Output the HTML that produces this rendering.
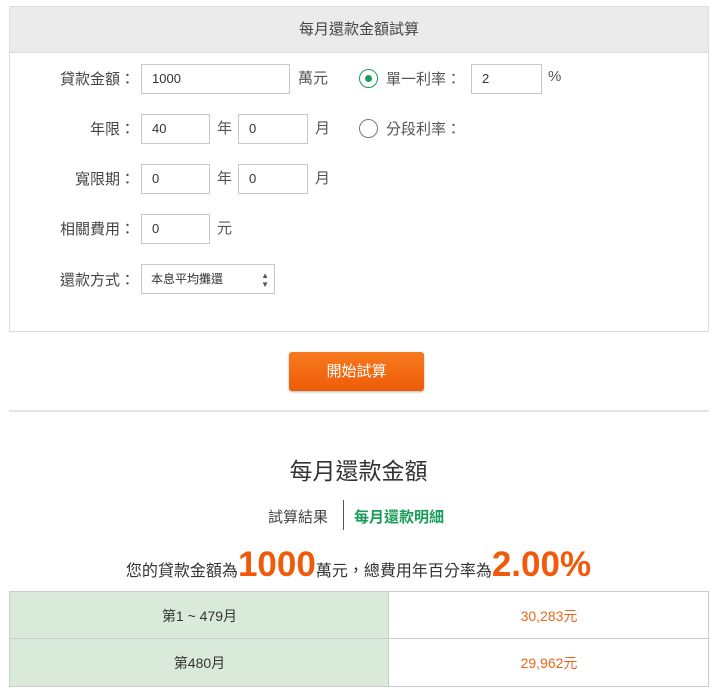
<!DOCTYPE html>
<html><head><meta charset="utf-8"><style>
*{box-sizing:border-box;margin:0;padding:0}
body{width:717px;height:693px;background:#fff;font-family:"Liberation Sans","Noto Sans CJK TC",sans-serif;color:#444;position:relative;overflow:hidden}
.a{position:absolute}
.box{left:9px;top:6px;width:700px;height:326px;border:1px solid #ddd}
.hd{left:10px;top:7px;width:698px;height:46px;background:#ebebeb;text-align:center;line-height:46px;font-size:15px;color:#444;border-bottom:1px solid #ddd}
.lb{font-size:15px;color:#444;text-align:right;width:135px;left:0px}
.in{border:1px solid #c8c8c8;height:30px;font-size:13px;line-height:28px;padding-left:10px;color:#333}
.t{font-size:15px;color:#555}
.rad{width:19px;height:19px;border:1px solid #777;border-radius:50%}
</style></head><body>
<div class="a box"></div>
<div class="a hd">每月還款金額試算</div>

<div class="a lb" style="top:68px">貸款金額：</div>
<div class="a in" style="left:141px;top:64px;width:149px">1000</div>
<div class="a t" style="left:298px;top:67px">萬元</div>
<div class="a rad" style="left:359px;top:69px;border-color:#1a9c5a"><div class="a" style="left:5px;top:5px;width:7px;height:7px;border-radius:50%;background:#1a9c5a"></div></div>
<div class="a t" style="left:386px;top:68px">單一利率：</div>
<div class="a in" style="left:471px;top:64px;width:71px">2</div>
<div class="a t" style="left:548px;top:68px">%</div>

<div class="a lb" style="top:118px">年限：</div>
<div class="a in" style="left:141px;top:114px;width:69px">40</div>
<div class="a t" style="left:217px;top:117px">年</div>
<div class="a in" style="left:238px;top:114px;width:70px">0</div>
<div class="a t" style="left:315px;top:117px">月</div>
<div class="a rad" style="left:359px;top:119px"></div>
<div class="a t" style="left:386px;top:118px">分段利率：</div>

<div class="a lb" style="top:168px">寬限期：</div>
<div class="a in" style="left:141px;top:164px;width:69px">0</div>
<div class="a t" style="left:217px;top:167px">年</div>
<div class="a in" style="left:238px;top:164px;width:70px">0</div>
<div class="a t" style="left:315px;top:167px">月</div>

<div class="a lb" style="top:218px">相關費用：</div>
<div class="a in" style="left:141px;top:214px;width:69px">0</div>
<div class="a t" style="left:217px;top:217px">元</div>

<div class="a lb" style="top:269px">還款方式：</div>
<div class="a in" style="left:141px;top:264px;width:134px;font-size:12px;padding-left:9px">本息平均攤還<span class="a" style="right:5px;font-size:8px;line-height:9px;top:6px;color:#555">▲<br>▼</span></div>

<div class="a" style="left:289px;top:352px;width:135px;height:39px;border-radius:3px;background:linear-gradient(#f77a1e,#ee5c08);box-shadow:0 1px 2px rgba(0,0,0,.3);color:#fff;text-align:center;line-height:39px;font-size:15px">開始試算</div>
<div class="a" style="left:9px;top:410px;width:700px;height:2px;background:#e4e4e4"></div>

<div class="a" style="left:0;width:717px;top:452px;text-align:center;font-size:23px;color:#333">每月還款金額</div>
<div class="a" style="left:268px;top:506px;font-size:15px;color:#444">試算結果</div>
<div class="a" style="left:343px;top:500px;width:1px;height:30px;background:#555"></div>
<div class="a" style="left:354px;top:506px;font-size:15px;color:#1a9c5a;font-weight:bold">每月還款明細</div>

<div class="a" style="left:0;width:717px;top:545px;text-align:center;font-size:16px;color:#333;white-space:nowrap">您的貸款金額為<b style="color:#f15a0a;font-size:35px">1000</b>萬元，總費用年百分率為<b style="color:#f15a0a;font-size:35px">2.00%</b></div>

<div class="a" style="left:9px;top:591px;width:700px;height:96px;border:1px solid #ccc"></div>
<div class="a" style="left:10px;top:592px;width:379px;height:94px;background:#d9eadb;border-right:1px solid #ccc"></div>
<div class="a" style="left:10px;top:638px;width:698px;height:1px;background:#ccc"></div>
<div class="a" style="left:10px;width:379px;top:606px;text-align:center;font-size:14px;color:#333">第1 ~ 479月</div>
<div class="a" style="left:10px;width:379px;top:653px;text-align:center;font-size:14px;color:#333">第480月</div>
<div class="a" style="left:390px;width:318px;top:606px;text-align:center;font-size:14px;color:#e8661a">30,283元</div>
<div class="a" style="left:390px;width:318px;top:653px;text-align:center;font-size:14px;color:#e8661a">29,962元</div>
</body></html>
